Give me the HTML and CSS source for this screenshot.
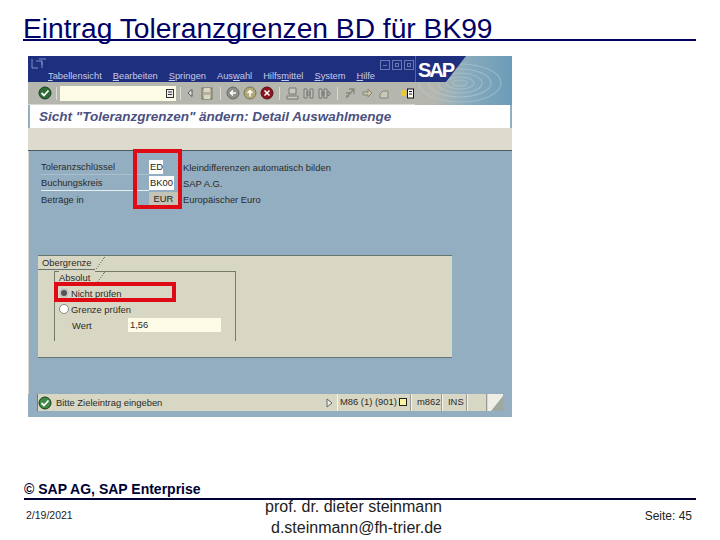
FILE: index.html
```html
<!DOCTYPE html>
<html lang="de">
<head>
    <meta charset="UTF-8">
    <title>Eintrag Toleranzgrenzen BD für BK99</title>
    <link rel="stylesheet" href="styles.css">
</head>
<body>
    <div id="slide">
        <h1 class="slide-title">Eintrag Toleranzgrenzen BD für BK99</h1>

        <div class="sap-window">
            <div class="titlebar">
                <div class="titlebar-left">
                    <svg class="sys-icon" width="16" height="12" viewBox="0 0 16 12"><path d="M1 1v9h6M5 3h6v7M8 1h7M11 3v4" fill="none" stroke="#7f8fc8"/></svg>
                    <div class="menu">
                        <span><u>T</u>abellensicht</span>
                        <span><u>B</u>earbeiten</span>
                        <span><u>S</u>pringen</span>
                        <span>Aus<u>w</u>ahl</span>
                        <span>Hilfs<u>m</u>ittel</span>
                        <span><u>S</u>ystem</span>
                        <span><u>H</u>ilfe</span>
                    </div>
                </div>
                <div class="win-buttons">
                    <span class="win-btn"><i class="btn-min"></i></span>
                    <span class="win-btn"><i class="btn-max"></i></span>
                    <span class="win-btn"><i class="btn-close"></i></span>
                </div>
            </div>

            <div class="logo">
                <svg width="97" height="49" viewBox="0 0 97 49">
                    <defs>
                        <linearGradient id="water" x1="0" y1="0" x2="1" y2="0">
                            <stop offset="0.2" stop-color="#b5b6ae"/>
                            <stop offset="0.55" stop-color="#88aabc"/>
                            <stop offset="1" stop-color="#6b9cb8"/>
                        </linearGradient>
                    </defs>
                    <rect width="97" height="49" fill="url(#water)"/>
                    <g fill="none" stroke="#b4d4e2" stroke-width="1.200" opacity="0.45">
                        <ellipse cx="45" cy="27" rx="7" ry="3"/>
                        <ellipse cx="45" cy="27" rx="14" ry="6"/>
                        <ellipse cx="45" cy="27" rx="22" ry="10"/>
                        <ellipse cx="45" cy="27" rx="31" ry="14"/>
                        <ellipse cx="45" cy="27" rx="41" ry="19"/>
                    </g>
                    <path d="M0 0H51L31 26H0Z" fill="#1f2f7f"/>
                    <path d="M0.500 26V0" stroke="#56639f"/>
                </svg>
                <span class="logo-text">SAP</span>
            </div>

            <div class="toolbar">
                <svg class="enter-icon" width="14" height="14" viewBox="0 0 14 14"><circle cx="7" cy="7" r="6" fill="#2f6b34" stroke="#1d3a20"/><path d="M3.500 7l2.500 2.500 4.500-5" fill="none" stroke="#fff" stroke-width="1.800"/></svg>
                <i class="sep sep-enter"></i>
                <div class="command">
                    <svg width="8" height="9" viewBox="0 0 8 9"><rect x="0.500" y="0.500" width="7" height="8" fill="#eee" stroke="#333"/><path d="M2 3h4M2 5.500h4" stroke="#333"/></svg>
                </div>
                <div class="tool-icons">
                    <i class="sep"></i>
                    <svg class="ml-3" width="6" height="8" viewBox="0 0 6 8"><path d="M5 0.500L1 4l4 3.500Z" fill="#eee" stroke="#555"/></svg>
                    <svg class="ml-5" width="12" height="13" viewBox="0 0 12 13"><rect x="1" y="1" width="10" height="11" fill="#b8b09a" stroke="#77705f"/><rect x="3" y="1" width="6" height="4" fill="#d8d6c8"/><rect x="3" y="8" width="6" height="4" fill="#d8d6c8"/></svg>
                    <i class="sep ml-4"></i>
                    <svg class="ml-2" width="14" height="14" viewBox="0 0 14 14"><circle cx="7" cy="7" r="6" fill="#8f8f88" stroke="#666"/><path d="M10 7H4.500M7 4.500L4.500 7 7 9.500" fill="none" stroke="#fff" stroke-width="1.500"/></svg>
                    <svg width="14" height="14" viewBox="0 0 14 14"><circle cx="7" cy="7" r="6" fill="#b0a878" stroke="#7c7654"/><path d="M7 10.500V4.500M4.500 7L7 4.500 9.500 7" fill="none" stroke="#fff" stroke-width="1.500"/></svg>
                    <svg width="14" height="14" viewBox="0 0 14 14"><circle cx="7" cy="7" r="6" fill="#8c1420" stroke="#5a0c14"/><path d="M4.500 4.500l5 5M9.500 4.500l-5 5" stroke="#fff" stroke-width="1.500"/></svg>
                    <i class="sep ml-2"></i>
                    <svg class="ml-3" width="13" height="13" viewBox="0 0 13 13"><path d="M3 1h7v6H3zM1 9h11v3H1z" fill="#c8c8be" stroke="#777"/></svg>
                    <svg width="13" height="13" viewBox="0 0 13 13"><path d="M2 2h3v9H2zM8 2h3v9H8zM5 5h3v3H5z" fill="#bebeb6" stroke="#777"/></svg>
                    <svg width="14" height="13" viewBox="0 0 14 13"><path d="M1 2h3v9H1zM6 2h3v9H6zM4 5h2v3H4zM10 4l3 2.500-3 2.500Z" fill="#bebeb6" stroke="#777"/></svg>
                    <i class="sep ml-2"></i>
                    <svg class="ml-3" width="13" height="13" viewBox="0 0 13 13"><path d="M2 11L10 2M5 2h5v5M2 6h4M2 9h3" fill="none" stroke="#87877a" stroke-width="1.300"/></svg>
                    <svg class="ml-1" width="13" height="13" viewBox="0 0 13 13"><path d="M2 5h5V2l4 4-4 4V8H2Z" fill="#c8c2a0" stroke="#87877a"/></svg>
                    <svg width="13" height="13" viewBox="0 0 13 13"><path d="M3 11h8V4H6L3 7Z" fill="#c8c8b8" stroke="#87877a"/></svg>
                    <svg class="tool-last" width="13" height="11" viewBox="0 0 13 11"><path d="M0 2h4l2 3-2 3H0Z" fill="#e8c830"/><rect x="6.500" y="1" width="6" height="9" fill="#fff" stroke="#111"/><path d="M8 3.500h3M8 6h3" stroke="#111"/></svg>
                </div>
            </div>

            <div class="screen-title">Sicht "Toleranzgrenzen" ändern: Detail Auswahlmenge</div>
            <div class="app-toolbar"></div>

            <div class="form-area">
                <div class="fields">
                    <div class="field-label underlined faint">Toleranzschlüssel</div>
                    <div class="value-cell"><span class="value value-sm">ED</span></div>
                    <div class="field-text">Kleindifferenzen automatisch bilden</div>

                    <div class="field-label underlined">Buchungskreis</div>
                    <div class="value-cell"><span class="value">BK00</span></div>
                    <div class="field-text">SAP A.G.</div>

                    <div class="field-label">Beträge in</div>
                    <div class="value-cell"><span class="value value-ro">EUR</span></div>
                    <div class="field-text">Europäischer Euro</div>
                </div>

                <div class="group">
                    <div class="tab tab-outer">Obergrenze</div>
                    <div class="subgroup">
                        <div class="tab tab-inner">Absolut</div>
                        <div class="radio-row">
                            <span class="radio checked"></span>Nicht prüfen
                        </div>
                        <div class="radio-row">
                            <span class="radio"></span>Grenze prüfen
                        </div>
                        <div class="wert-row">
                            <span class="wert-label">Wert</span>
                            <span class="wert-input">1,56</span>
                        </div>
                    </div>
                </div>

                <div class="red-box box-fields"></div>
                <div class="red-box box-radio"></div>
            </div>

            <div class="statusbar">
                <svg width="14" height="14" viewBox="0 0 14 14"><circle cx="7" cy="7" r="6" fill="#3d8a45" stroke="#1d3a20"/><path d="M3.500 7l2.500 2.500 4.500-5" fill="none" stroke="#fff" stroke-width="1.800"/></svg>
                <span class="status-msg">Bitte Zieleintrag eingeben</span>
                <svg class="status-arrow" width="7" height="10" viewBox="0 0 7 10"><path d="M1 1l5 4-5 4Z" fill="#eee" stroke="#666"/></svg>
                <div class="status-cell cell-sys">M86 (1) (901) <i class="status-flag"></i></div>
                <div class="status-cell cell-host">m862</div>
                <div class="status-cell cell-ins">INS</div>
                <div class="status-cell cell-empty"></div>
                <svg class="grip" width="15" height="17" viewBox="0 0 15 17"><rect width="15" height="17" fill="#eeeee4"/><path d="M15 2L3 17H15Z" fill="#9fa89f"/></svg>
            </div>
            <div class="window-bottom"></div>
        </div>

        <div class="copyright">© SAP AG, SAP Enterprise</div>
        <div class="footer">
            <div class="footer-date">2/19/2021</div>
            <div class="footer-author">
                prof. dr. dieter steinmann<br>
                d.steinmann@fh-trier.de
            </div>
            <div class="footer-page">Seite: 45</div>
        </div>
    </div>
</body>
</html>
```

FILE: styles.css
```css
html, body {
    margin: 0;
    padding: 0;
    background-color: #fff;
}
#slide {
    width: 720px;
    height: 540px;
    overflow: hidden;
    font-family: "Liberation Sans", Arial, sans-serif;
}
.slide-title {
    margin: 0 24px 0 23px;
    height: 41px;
    box-sizing: border-box;
    padding-top: 13px;
    border-bottom: 2px solid #000066;
    font-size: 28.200px;
    font-weight: normal;
    line-height: 31px;
    color: #000066;
    white-space: nowrap;
}

/* sap window */
.sap-window {
    position: relative;
    width: 484px;
    height: 361px;
    margin: 15px 0 0 28px;
    font-size: 9.400px;
    color: #2a2a2a;
    background-color: #93aec0;
}
.titlebar {
    height: 26px;
    box-sizing: border-box;
    padding-right: 97px;
    display: flex;
    justify-content: space-between;
    background-color: #1f2f7f;
    color: #c4cbe6;
}
.titlebar-left {
    padding: 2px 0 0 3px;
}
.sys-icon {
    display: block;
}
.menu {
    display: flex;
    gap: 11px;
    margin: 0 0 0 17px;
    font-size: 9.300px;
    line-height: 12px;
    white-space: nowrap;
}
.win-buttons {
    display: flex;
    gap: 2px;
    padding: 4px 1px 0 0;
}
.win-btn {
    width: 10px;
    height: 10px;
    box-sizing: border-box;
    border: 1px solid #6a77b0;
    display: flex;
    align-items: center;
    justify-content: center;
}
.win-btn i {
    display: block;
    border: 1px solid #6a77b0;
}
.btn-min {
    width: 4px;
    height: 0;
    border-width: 1px 0 0 0 !important;
}
.btn-max {
    width: 2px;
    height: 2px;
}
.btn-close {
    width: 2px;
    height: 2px;
}
.logo {
    position: absolute;
    top: 0;
    right: 0;
    width: 97px;
    height: 49px;
}
.logo svg {
    display: block;
}
.logo-text {
    position: absolute;
    top: 4px;
    left: 3px;
    font-size: 20px;
    font-weight: bold;
    line-height: 20px;
    letter-spacing: -2px;
    color: #fff;
}
.toolbar {
    height: 23px;
    box-sizing: border-box;
    display: flex;
    align-items: center;
    padding-left: 10px;
    background-color: #b5b6ae;
    border-bottom: 1px solid #d8d8d0;
}
.enter-icon {
    flex-shrink: 0;
}
.sep-enter {
    margin-left: 4px;
    height: 19px;
}
.command {
    width: 116px;
    height: 15px;
    margin-left: 3px;
    box-sizing: border-box;
    padding-right: 2px;
    display: flex;
    align-items: center;
    justify-content: flex-end;
    background-color: #fbfbe6;
}
.tool-icons {
    display: flex;
    align-items: center;
    gap: 3px;
    margin-left: 4px;
}
.sep {
    display: block;
    width: 1px;
    height: 13px;
    background-color: #dcdcd4;
}
.ml-1 { margin-left: 1px; }
.ml-2 { margin-left: 2px; }
.ml-3 { margin-left: 3px; }
.ml-4 { margin-left: 4px; }
.ml-5 { margin-left: 5px; }
.tool-last {
    margin-left: 8px;
}
.screen-title {
    height: 23px;
    margin: 0 2px;
    padding-left: 9px;
    background-color: #fff;
    font-size: 13.500px;
    font-weight: bold;
    font-style: italic;
    line-height: 23px;
    color: #4b5080;
}
.app-toolbar {
    height: 23px;
    background-color: #dcdbce;
    border-bottom: 1px solid #4a5a60;
    box-sizing: border-box;
}
.form-area {
    position: relative;
    height: 243px;
    box-sizing: border-box;
    padding: 8px 0 0 10px;
    border-left: 1px solid #d8d8d0;
}
.fields {
    display: grid;
    grid-template-columns: 108px 34px 1fr;
    grid-auto-rows: 16px;
    width: 440px;
    margin-left: 2px;
    align-items: center;
}
.field-label.underlined {
    height: 15px;
    line-height: 15px;
    border-bottom: 1px solid #e8efef;
}
.field-label.faint {
    border-bottom-color: #a9bfcd;
}
.value-cell {
    display: flex;
}
.value {
    height: 14px;
    line-height: 14px;
    padding: 0 1px;
    background-color: #fff;
    color: #222;
}
.value-sm {
    width: 12px;
}
.value-ro {
    width: 27px;
    text-align: center;
    background-color: #c4c4b6;
}
.field-text {
    white-space: nowrap;
}

/* Obergrenze box */
.group {
    position: relative;
    width: 414px;
    height: 103px;
    box-sizing: border-box;
    margin: 48px 0 0 -1px;
    padding: 15px 0 0 16px;
    background-color: #d8d7c4;
    border-top: 1px solid #66766f;
    border-bottom: 1px solid #66766f;
}
.tab {
    position: absolute;
    line-height: 13px;
    white-space: nowrap;
}
.tab::after {
    content: "";
    position: absolute;
    top: 1px;
    right: -6px;
    height: 12px;
    border-right: 1px dotted #66766f;
    transform: skewX(-35deg);
}
.tab-outer {
    top: 0;
    left: 0;
    width: 53px;
    height: 13px;
    padding-left: 4px;
    border-bottom: 1px solid #66766f;
}
.subgroup {
    position: relative;
    width: 182px;
    height: 70px;
    box-sizing: border-box;
    padding-top: 13px;
    border: 1px solid #777a66;
    border-bottom: 0;
}
.tab-inner {
    top: -1px;
    left: 4px;
    width: 36px;
    height: 13px;
    background-color: #d8d7c4;
}
.radio-row {
    display: flex;
    align-items: center;
    gap: 2px;
    height: 16px;
    padding-left: 4px;
}
.radio {
    width: 10px;
    height: 10px;
    box-sizing: border-box;
    border: 1px solid #888;
    border-radius: 50%;
    background-color: #fff;
}
.radio.checked {
    background-color: #555;
    border: 2px solid #c4c4c4;
}
.wert-row {
    display: flex;
    align-items: center;
    height: 16px;
    padding-left: 17px;
}
.wert-label {
    width: 56px;
}
.wert-input {
    width: 93px;
    height: 14px;
    box-sizing: border-box;
    padding-left: 2px;
    line-height: 14px;
    background-color: #fbfbe6;
}
.red-box {
    position: absolute;
    box-sizing: border-box;
    border: 4px solid #e00a14;
}
.box-fields {
    top: -2px;
    left: 104px;
    width: 49px;
    height: 60px;
}
.box-radio {
    top: 131px;
    left: 25px;
    width: 122px;
    height: 20px;
}

.statusbar {
    height: 17px;
    margin: 0 9px;
    display: flex;
    align-items: center;
    background-color: #d8d7c4;
    border-left: 1px solid #777;
    white-space: nowrap;
}
.status-msg {
    margin-left: 4px;
    width: 270px;
}
.status-arrow {
    margin-right: 4px;
}
.status-cell {
    height: 17px;
    box-sizing: border-box;
    padding-left: 2px;
    line-height: 16px;
    border-left: 1px solid #f4f4ea;
    border-right: 1px solid #999;
}
.cell-sys {
    width: 74px;
}
.status-flag {
    display: inline-block;
    width: 8px;
    height: 8px;
    background-color: #fbf3a0;
    border: 1px solid #222;
    box-sizing: border-box;
    vertical-align: -1px;
}
.cell-host {
    width: 31px;
    padding-left: 5px;
}
.cell-ins {
    width: 25px;
    padding-left: 5px;
}
.cell-empty {
    width: 20px;
}
.grip {
    margin-left: auto;
}
.window-bottom {
    height: 5px;
    background-color: #93aec0;
}

/* footer */
.copyright {
    margin: 65px 24px 0 24px;
    height: 16px;
    box-sizing: border-box;
    font-size: 14px;
    font-weight: bold;
    line-height: 15px;
    color: #000033;
    white-space: nowrap;
}
.footer {
    margin: 0 24px;
    height: 42px;
    box-sizing: border-box;
    border-top: 2px solid #000033;
    display: grid;
    grid-template-columns: 241px 177px 1fr;
    align-items: start;
    color: #222;
}
.footer-date {
    font-size: 10.500px;
    line-height: 12px;
    padding: 9px 0 0 2px;
}
.footer-author {
    font-size: 16px;
    line-height: 21px;
    margin-top: -4px;
    text-align: right;
    white-space: nowrap;
}
.footer-page {
    font-size: 12px;
    line-height: 14px;
    padding: 9px 4px 0 0;
    text-align: right;
}
```
